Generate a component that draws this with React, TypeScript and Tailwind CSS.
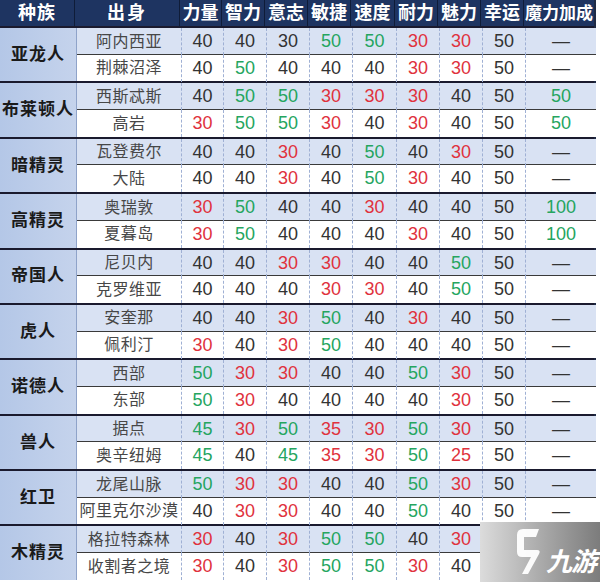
import React from "react";

type Tone = "r" | "g" | "n";
type Cell = [string, Tone];

type Origin = { name: string; stats: Cell[] };
type Race = { race: string; origins: Origin[] };

const HEADERS = ["力量", "智力", "意志", "敏捷", "速度", "耐力", "魅力", "幸运", "魔力加成"];
const COLS = "grid-cols-[105px_42px_43px_43px_43px_44px_43px_43px_43px_70px]";

// shorthand: "40" plain, "50g" green, "30r" red
const row = (s: string): Cell[] =>
  s.split(" ").map((v) => {
    if (v.endsWith("g")) return [v.slice(0, -1), "g"];
    if (v.endsWith("r")) return [v.slice(0, -1), "r"];
    return [v, "n"];
  });

const DATA: Race[] = [
  { race: "亚龙人", origins: [
    { name: "阿内西亚", stats: row("40 40 30 50g 50g 30r 30r 50 —") },
    { name: "荆棘沼泽", stats: row("40 50g 40 40 40 30r 30r 50 —") },
  ] },
  { race: "布莱顿人", origins: [
    { name: "西斯忒斯", stats: row("40 50g 50g 30r 30r 30r 40 50 50g") },
    { name: "高岩", stats: row("30r 50g 50g 30r 40 30r 40 50 50g") },
  ] },
  { race: "暗精灵", origins: [
    { name: "瓦登费尔", stats: row("40 40 30r 40 50g 40 30r 50 —") },
    { name: "大陆", stats: row("40 40 30r 40 50g 30r 40 50 —") },
  ] },
  { race: "高精灵", origins: [
    { name: "奥瑞敦", stats: row("30r 50g 40 40 30r 40 40 50 100g") },
    { name: "夏暮岛", stats: row("30r 50g 40 40 40 30r 40 50 100g") },
  ] },
  { race: "帝国人", origins: [
    { name: "尼贝内", stats: row("40 40 30r 30r 40 40 50g 50 —") },
    { name: "克罗维亚", stats: row("40 40 40 30r 30r 40 50g 50 —") },
  ] },
  { race: "虎人", origins: [
    { name: "安奎那", stats: row("40 40 30r 50g 40 30r 40 50 —") },
    { name: "佩利汀", stats: row("30r 40 30r 50g 40 40 40 50 —") },
  ] },
  { race: "诺德人", origins: [
    { name: "西部", stats: row("50g 30r 30r 40 40 50g 30r 50 —") },
    { name: "东部", stats: row("50g 30r 40 40 40 40 30r 50 —") },
  ] },
  { race: "兽人", origins: [
    { name: "据点", stats: row("45g 30r 50g 35r 30r 50g 30r 50 —") },
    { name: "奥辛纽姆", stats: row("45g 40 45g 35r 30r 50g 25r 50 —") },
  ] },
  { race: "红卫", origins: [
    { name: "龙尾山脉", stats: row("50g 30r 30r 40 40 50g 30r 50 —") },
    { name: "阿里克尔沙漠", stats: row("40 30r 30r 40 40 50g 40 50 —") },
  ] },
  { race: "木精灵", origins: [
    { name: "格拉特森林", stats: row("30r 40 30r 50g 50g 40 30r") },
    { name: "收割者之境", stats: row("30r 40 30r 50g 50g 30r 40") },
  ] },
];

const toneClass = (t: Tone) =>
  t === "r" ? "text-[#e0323d]" : t === "g" ? "text-[#25a55f]" : "text-[#333333]";

function OriginRow({ origin, shaded, last }: { origin: Origin; shaded: boolean; last: boolean }) {
  // covered cells (under the watermark) stay empty
  const cells: Cell[] = [...origin.stats];
  while (cells.length < 9) cells.push(["", "n"]);
  return (
    <div
      className={`grid ${COLS} h-[26.7px] ${shaded ? "bg-[#d9e2f3]" : "bg-white"} ${
        last ? "" : "border-b border-[#3a3a3a]"
      }`}
    >
      <div className="flex items-center justify-center whitespace-nowrap text-[16px] text-[#474747] tracking-[0.5px] border-r border-dashed border-[#9fb0d4]">
        {origin.name}
      </div>
      {cells.map(([v, t], i) => (
        <div
          key={i}
          className={`flex items-center justify-center text-[18px] ${toneClass(t)} ${
            i < cells.length - 1 ? "border-r border-dashed border-[#9fb0d4]" : ""
          }`}
        >
          {v}
        </div>
      ))}
    </div>
  );
}

function Watermark() {
  return (
    <div className="absolute left-[480px] top-[522px] w-[120px] h-[60px] bg-gradient-to-r from-[#dcdcdc] via-[#ababab] to-[#7c7c7c] flex items-end pl-[34px] pb-[5px] gap-[2px]">
      <svg width="30" height="50" viewBox="0 0 30 50">
        <path
          d="M25 2 L9 2 Q3 2 3 8 L3 25 Q3 30 8 30 L17 30 L8 47 L14 47 L25 27 Q27 23 23 23 L10 23 L10 10 L22 10 Z"
          fill="white"
          opacity="0.95"
        />
      </svg>
      <span className="text-white text-[26px] font-bold italic tracking-[-1px] leading-none pb-[2px]">九游</span>
    </div>
  );
}

export default function App() {
  return (
    <div
      className="relative w-[600px] h-[582px] bg-white overflow-hidden"
      style={{ fontFamily: '"Liberation Sans", "Noto Sans CJK SC", sans-serif' }}
    >
      <div className="w-[596px] border-r-2 border-[#1f2a44]">
        {/* Header */}
        <div className="flex h-[28px] bg-[#1e3461] text-white font-bold text-[18px] border-b-2 border-[#1a1a2e]">
          <div className="w-[77px] flex items-center justify-center border-r border-[#0f1c38] tracking-[1px]">种族</div>
          <div className={`grid ${COLS} flex-1`}>
            <div className="flex items-center justify-center border-r border-[#0f1c38] tracking-[2px]">出身</div>
            {HEADERS.map((h, i) => (
              <div
                key={h}
                className={`flex items-center justify-center whitespace-nowrap ${
                  i < HEADERS.length - 1 ? "border-r border-[#0f1c38]" : "text-[17px]"
                }`}
              >
                {h}
              </div>
            ))}
          </div>
        </div>

        {/* Body */}
        {DATA.map((g, gi) => (
          <div
            key={g.race}
            className={`flex ${gi < DATA.length - 1 ? "border-b-2 border-[#1a1a2e]" : ""}`}
          >
            <div className="w-[77px] shrink-0 flex items-center justify-center whitespace-nowrap bg-gradient-to-r from-[#b4c7e7] to-[#c5d3ec] text-[#1a1a1a] font-bold text-[17px] tracking-[1px] border-r border-[#8fa3c9]">
              {g.race}
            </div>
            <div className="flex-1 flex flex-col">
              {g.origins.map((o, oi) => (
                <OriginRow key={o.name} origin={o} shaded={oi === 0} last={oi === g.origins.length - 1} />
              ))}
            </div>
          </div>
        ))}
      </div>
      <Watermark />
    </div>
  );
}
